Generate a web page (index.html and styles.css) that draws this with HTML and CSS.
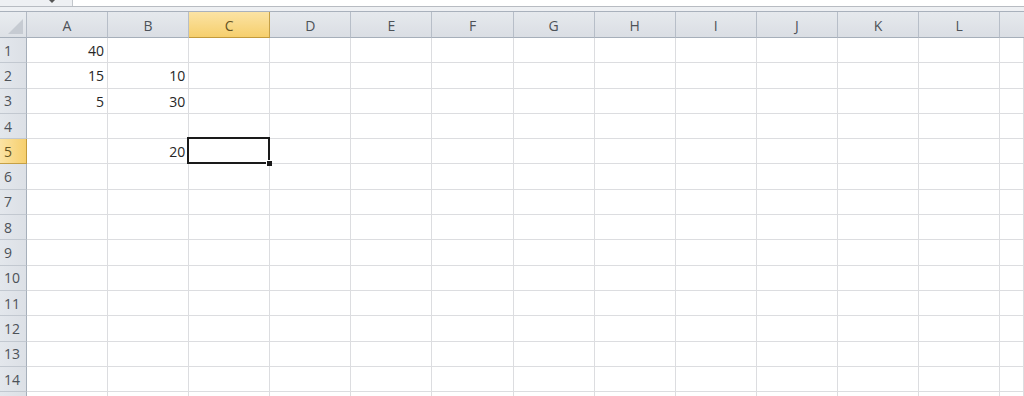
FILE: index.html
```html
<!DOCTYPE html>
<html>
<head>
<meta charset="utf-8">
<link rel="stylesheet" href="styles.css">
</head>
<body>
<div class="topbar">
  <div class="namebox"><span class="drop"></span></div>
  <div class="formula"></div>
</div>
<div class="band"></div>
<div class="sheet">
  <div class="corner"><span class="tri"></span></div>
  <div class="ch">A</div><div class="ch">B</div><div class="ch sel">C</div><div class="ch">D</div><div class="ch">E</div><div class="ch">F</div><div class="ch">G</div><div class="ch">H</div><div class="ch">I</div><div class="ch">J</div><div class="ch">K</div><div class="ch">L</div><div class="ch last"></div>

  <div class="rh">1</div><div class="c">40</div><div class="c"></div><div class="c"></div><div class="c"></div><div class="c"></div><div class="c"></div><div class="c"></div><div class="c"></div><div class="c"></div><div class="c"></div><div class="c"></div><div class="c"></div><div class="c"></div>
  <div class="rh">2</div><div class="c">15</div><div class="c">10</div><div class="c"></div><div class="c"></div><div class="c"></div><div class="c"></div><div class="c"></div><div class="c"></div><div class="c"></div><div class="c"></div><div class="c"></div><div class="c"></div><div class="c"></div>
  <div class="rh">3</div><div class="c">5</div><div class="c">30</div><div class="c"></div><div class="c"></div><div class="c"></div><div class="c"></div><div class="c"></div><div class="c"></div><div class="c"></div><div class="c"></div><div class="c"></div><div class="c"></div><div class="c"></div>
  <div class="rh">4</div><div class="c"></div><div class="c"></div><div class="c"></div><div class="c"></div><div class="c"></div><div class="c"></div><div class="c"></div><div class="c"></div><div class="c"></div><div class="c"></div><div class="c"></div><div class="c"></div><div class="c"></div>
  <div class="rh sel">5</div><div class="c"></div><div class="c">20</div><div class="c active"><span class="handle"></span></div><div class="c"></div><div class="c"></div><div class="c"></div><div class="c"></div><div class="c"></div><div class="c"></div><div class="c"></div><div class="c"></div><div class="c"></div><div class="c"></div>
  <div class="rh">6</div><div class="c"></div><div class="c"></div><div class="c"></div><div class="c"></div><div class="c"></div><div class="c"></div><div class="c"></div><div class="c"></div><div class="c"></div><div class="c"></div><div class="c"></div><div class="c"></div><div class="c"></div>
  <div class="rh">7</div><div class="c"></div><div class="c"></div><div class="c"></div><div class="c"></div><div class="c"></div><div class="c"></div><div class="c"></div><div class="c"></div><div class="c"></div><div class="c"></div><div class="c"></div><div class="c"></div><div class="c"></div>
  <div class="rh">8</div><div class="c"></div><div class="c"></div><div class="c"></div><div class="c"></div><div class="c"></div><div class="c"></div><div class="c"></div><div class="c"></div><div class="c"></div><div class="c"></div><div class="c"></div><div class="c"></div><div class="c"></div>
  <div class="rh">9</div><div class="c"></div><div class="c"></div><div class="c"></div><div class="c"></div><div class="c"></div><div class="c"></div><div class="c"></div><div class="c"></div><div class="c"></div><div class="c"></div><div class="c"></div><div class="c"></div><div class="c"></div>
  <div class="rh">10</div><div class="c"></div><div class="c"></div><div class="c"></div><div class="c"></div><div class="c"></div><div class="c"></div><div class="c"></div><div class="c"></div><div class="c"></div><div class="c"></div><div class="c"></div><div class="c"></div><div class="c"></div>
  <div class="rh">11</div><div class="c"></div><div class="c"></div><div class="c"></div><div class="c"></div><div class="c"></div><div class="c"></div><div class="c"></div><div class="c"></div><div class="c"></div><div class="c"></div><div class="c"></div><div class="c"></div><div class="c"></div>
  <div class="rh">12</div><div class="c"></div><div class="c"></div><div class="c"></div><div class="c"></div><div class="c"></div><div class="c"></div><div class="c"></div><div class="c"></div><div class="c"></div><div class="c"></div><div class="c"></div><div class="c"></div><div class="c"></div>
  <div class="rh">13</div><div class="c"></div><div class="c"></div><div class="c"></div><div class="c"></div><div class="c"></div><div class="c"></div><div class="c"></div><div class="c"></div><div class="c"></div><div class="c"></div><div class="c"></div><div class="c"></div><div class="c"></div>
  <div class="rh">14</div><div class="c"></div><div class="c"></div><div class="c"></div><div class="c"></div><div class="c"></div><div class="c"></div><div class="c"></div><div class="c"></div><div class="c"></div><div class="c"></div><div class="c"></div><div class="c"></div><div class="c"></div>
  <div class="rh"></div><div class="c"></div><div class="c"></div><div class="c"></div><div class="c"></div><div class="c"></div><div class="c"></div><div class="c"></div><div class="c"></div><div class="c"></div><div class="c"></div><div class="c"></div><div class="c"></div><div class="c"></div>
</div>
</body>
</html>
```
FILE: styles.css
```css
html, body {
  margin: 0;
  padding: 0;
  background: #ffffff;
  overflow: hidden;
  height: 396px;
  font-family: "Open Sans", "Liberation Sans", sans-serif;
}

.topbar {
  display: flex;
  height: 6px;
  border-bottom: 1px solid #b8bcc2;
  overflow: hidden;
}

.namebox {
  width: 73px;
  background: #eef0f3;
  border-right: 1px solid #c3c7cc;
  position: relative;
  box-sizing: border-box;
}

.drop {
  position: absolute;
  left: 49px;
  top: 0;
  width: 0;
  height: 0;
  border-left: 3px solid transparent;
  border-right: 3px solid transparent;
  border-top: 3px solid #555;
}

.formula {
  flex: 1;
  background: #ffffff;
}

.band {
  height: 4px;
  background: #eef0f3;
  border-bottom: 1px solid #a9b1bc;
}

.sheet {
  display: grid;
  grid-template-columns: 27px repeat(12, 81.1px) 1fr;
  grid-template-rows: 26px repeat(15, 25.3px);
}

.corner {
  background: linear-gradient(#e9ecf0, #dde1e6);
  border-right: 1px solid #b3bac4;
  border-bottom: 1px solid #a6afba;
  position: relative;
}

.tri {
  position: absolute;
  right: 3px;
  bottom: 3px;
  width: 0;
  height: 0;
  border-left: 15px solid transparent;
  border-bottom: 15px solid #c6cbd2;
}

.ch {
  background: linear-gradient(#e6e9ed, #dadee4);
  border-right: 1px solid #b7bec8;
  border-bottom: 1px solid #a6afba;
  display: flex;
  align-items: center;
  justify-content: center;
  font-size: 14px;
  color: #4d5258;
  padding-top: 1px;
}

.ch.sel {
  background: linear-gradient(#fbe3a4, #f6cf6d);
  border-right-color: #c5a046;
  border-bottom-color: #c29a3c;
  color: #655424;
}

.ch.last {
  border-right: none;
}

.rh {
  background: linear-gradient(90deg, #e3e7ec, #dce0e6);
  border-right: 1px solid #a6afba;
  border-bottom: 1px solid #c2c8d0;
  display: flex;
  align-items: center;
  padding-left: 4px;
  font-size: 14px;
  color: #4d5258;
}

.rh.sel {
  background: linear-gradient(90deg, #fbe3a4, #f6cf6d);
  border-right-color: #c29a3c;
  border-bottom-color: #c5a046;
  color: #655424;
}

.c {
  border-right: 1px solid #dcdde0;
  border-bottom: 1px solid #dcdde0;
  display: flex;
  align-items: center;
  justify-content: flex-end;
  padding-right: 3px;
  font-size: 14px;
  color: #262626;
  padding-top: 1px;
}

.c.active {
  position: relative;
}

.c.active::after {
  content: "";
  position: absolute;
  left: -2px;
  top: -2px;
  right: -1px;
  bottom: -1px;
  border: 2px solid #1a1a1a;
  pointer-events: none;
}

.handle {
  position: absolute;
  right: -3px;
  bottom: -3px;
  width: 5px;
  height: 5px;
  background: #1a1a1a;
  border-left: 1px solid #fff;
  border-top: 1px solid #fff;
  z-index: 2;
}
```
